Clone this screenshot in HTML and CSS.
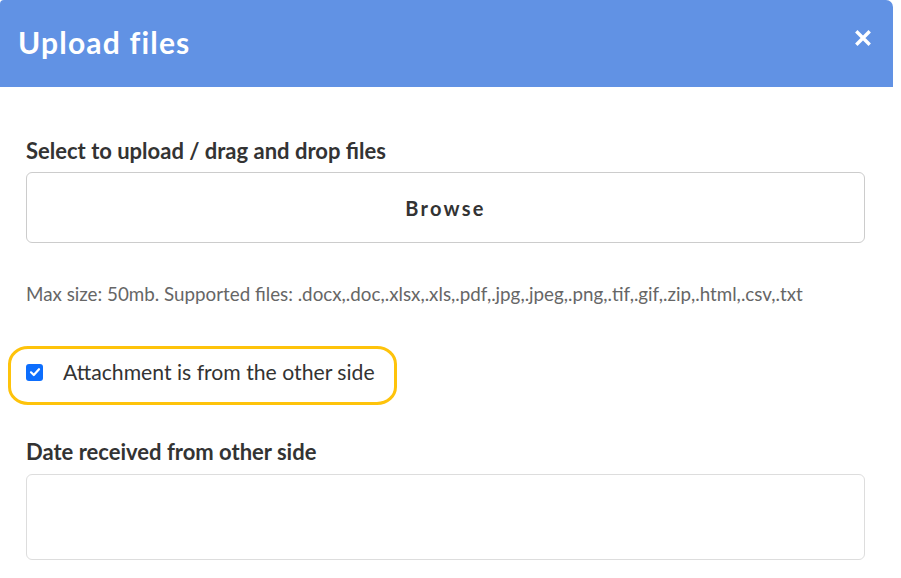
FILE: index.html
```html
<!DOCTYPE html>
<html lang="en">
<head>
<meta charset="utf-8">
<title>Upload files</title>
<link rel="stylesheet" href="styles.css">
</head>
<body>
<div class="modal">
  <div class="modal-header">
    <h1 class="modal-title">Upload files</h1>
    <button class="close-btn" aria-label="Close">
      <svg width="16" height="16" viewBox="0 0 16 16"><path d="M2.5 2.5 L13.5 13.5 M13.5 2.5 L2.5 13.5" stroke="#fff" stroke-width="3.4" stroke-linecap="square" fill="none"/></svg>
    </button>
  </div>
  <div class="modal-body">
    <div class="field">
      <label class="field-label">Select to upload / drag and drop files</label>
      <div class="browse-box">Browse</div>
    </div>
    <p class="help">Max size: 50mb. Supported files: .docx,.doc,.xlsx,.xls,.pdf,.jpg,.jpeg,.png,.tif,.gif,.zip,.html,.csv,.txt</p>
    <div class="check-row">
      <span class="checkbox">
        <svg width="12" height="12" viewBox="0 0 12 12"><path d="M2 6.3 L4.8 9 L10 3.2" stroke="#fff" stroke-width="2.2" fill="none" stroke-linecap="round" stroke-linejoin="round"/></svg>
      </span>
      <span class="check-label">Attachment is from the other side</span>
      <span class="highlight"></span>
    </div>
    <div class="field date-field">
      <label class="field-label">Date received from other side</label>
      <div class="date-box"></div>
    </div>
  </div>
</div>
</body>
</html>
```
FILE: styles.css
```css
html, body {
  margin: 0;
  padding: 0;
  background: #fff;
}
body {
  font-family: Lato, "Open Sans", sans-serif;
  color: #333;
}
.modal {
  width: 893px;
  background: #fff;
}
.modal-header {
  height: 87px;
  background: #6192e4;
  border-radius: 4px 7px 0 0;
  display: flex;
  align-items: center;
  justify-content: space-between;
  padding: 0 22px 0 18px;
  box-sizing: border-box;
}
.modal-title {
  margin: 0 0 3px 0;
  color: #fff;
  font-family: Lato, sans-serif;
  font-weight: 700;
  font-size: 30px;
  line-height: 36px;
  letter-spacing: 1.2px;
}
.close-btn {
  background: none;
  border: 0;
  padding: 0;
  width: 16px;
  height: 16px;
  display: flex;
  margin-bottom: 12px;
}
.modal-body {
  padding: 51px 28px 0 26px;
}
.field-label {
  display: block;
  font-weight: 700;
  font-size: 22px;
  line-height: 26px;
  color: #333;
}
.browse-box {
  margin-top: 8px;
  height: 71px;
  border: 1px solid #ccc;
  border-radius: 6px;
  display: flex;
  align-items: center;
  justify-content: center;
  font-family: Lato, sans-serif;
  font-weight: 700;
  font-size: 20px;
  letter-spacing: 2.3px;
  color: #333;
  box-sizing: border-box;
}
.help {
  margin: 40px 0 0 0;
  font-size: 18.8px;
  line-height: 22px;
  color: #666;
}
.check-row {
  position: relative;
  display: flex;
  align-items: center;
  margin-top: 54px;
  height: 26px;
}
.checkbox {
  width: 17px;
  height: 17px;
  border-radius: 3px;
  background: #0d6efd;
  display: flex;
  align-items: center;
  justify-content: center;
  flex: none;
}
.check-label {
  margin-left: 20px;
  font-size: 21.2px;
  color: #333;
}
.highlight {
  position: absolute;
  left: -18px;
  top: -13px;
  width: 383px;
  height: 53px;
  border: 3px solid #fec30b;
  border-radius: 20px / 18px;
  pointer-events: none;
}
.date-field {
  margin-top: 54px;
}
.date-box {
  margin-top: 9px;
  height: 86px;
  border: 1px solid #ddd;
  border-radius: 6px;
  box-sizing: border-box;
}
```
